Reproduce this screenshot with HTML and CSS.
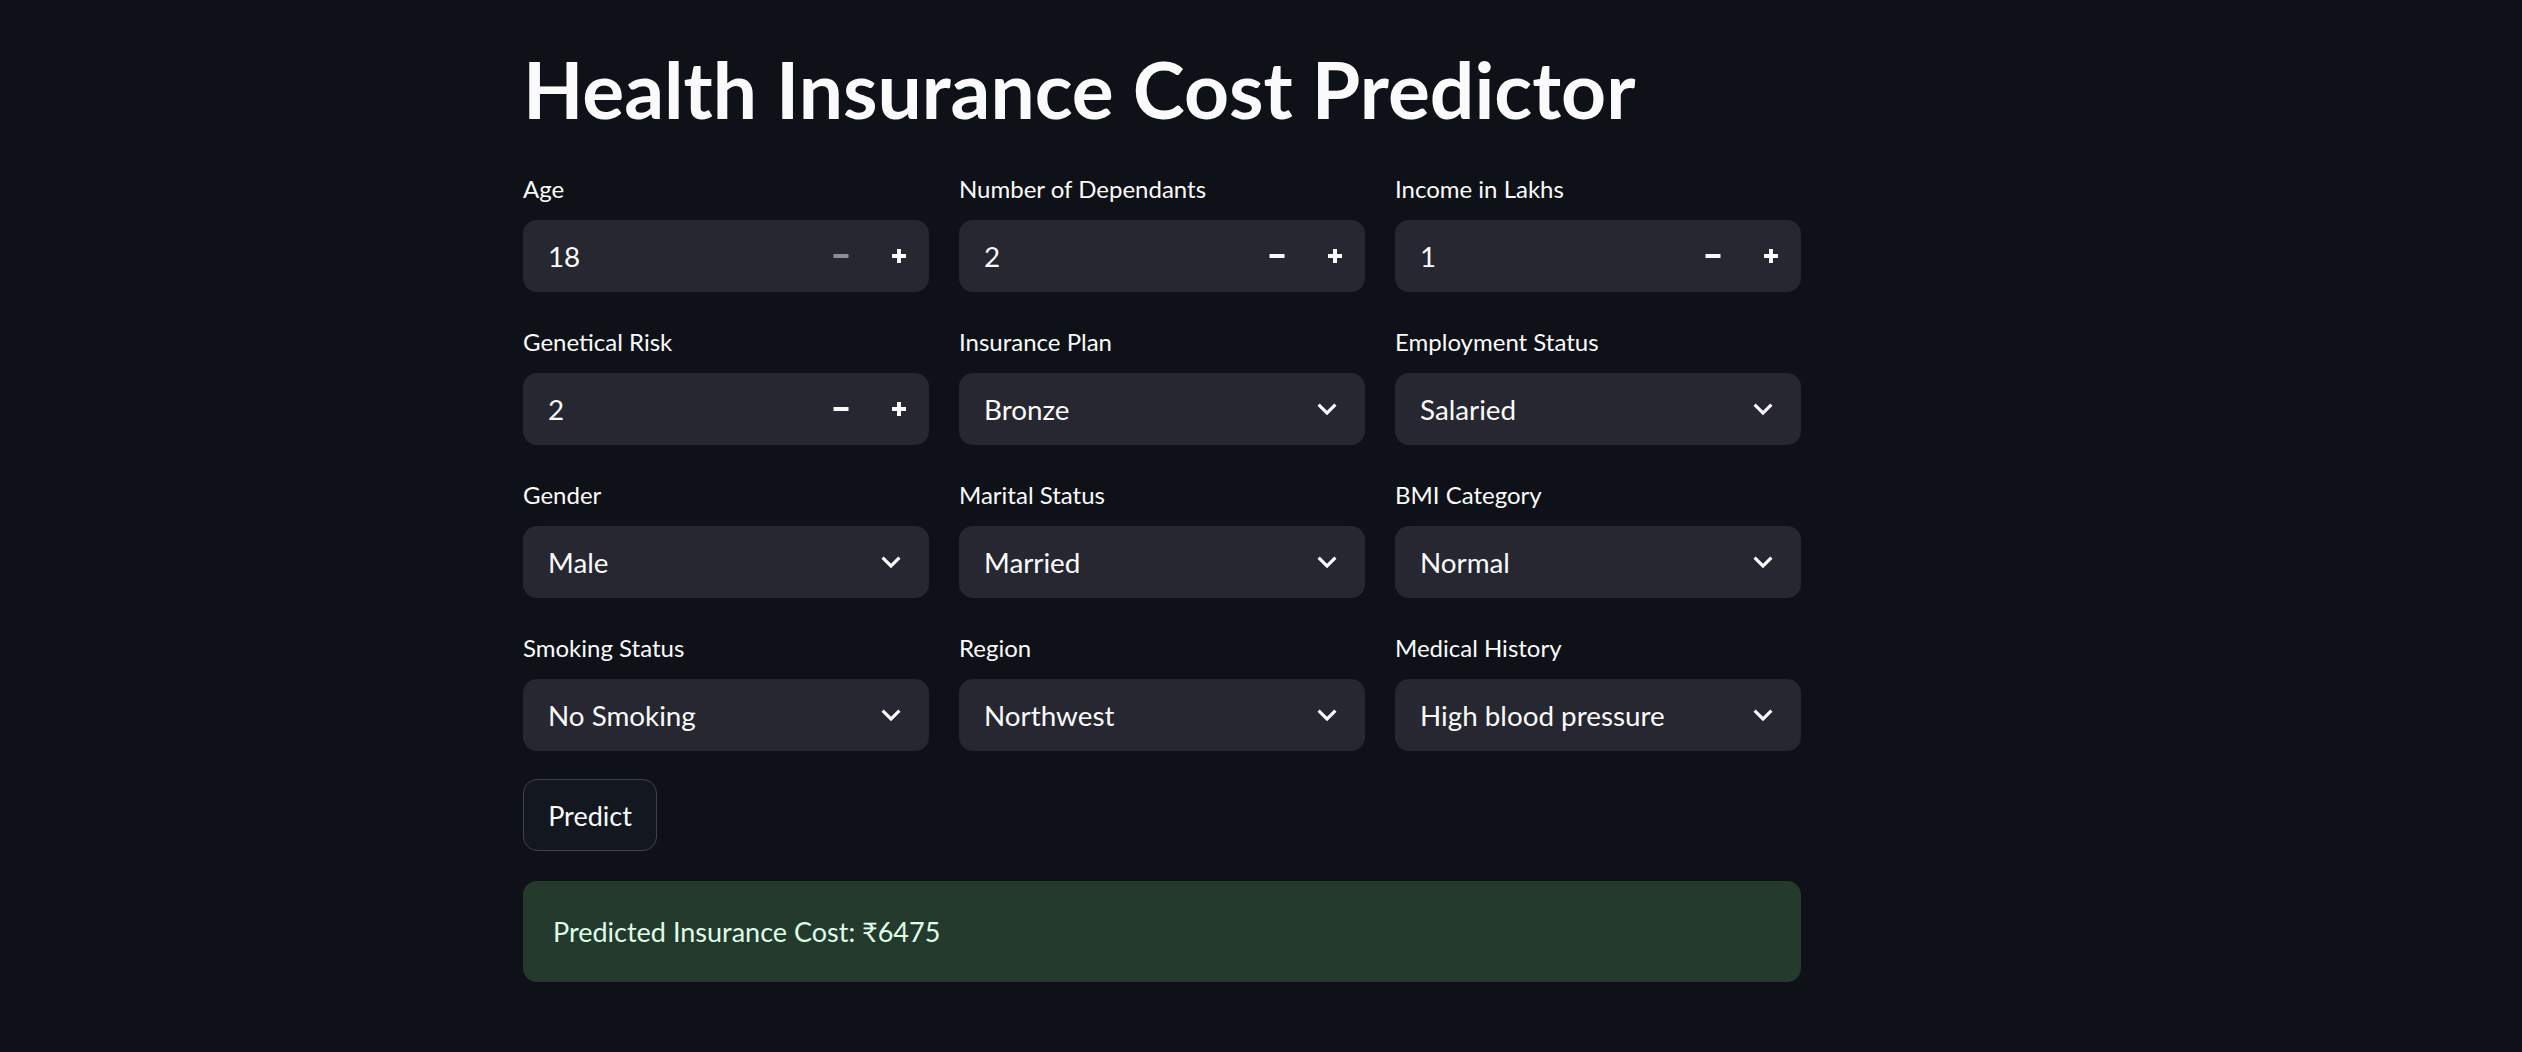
FILE: index.html
```html
<!DOCTYPE html>
<html lang="en">
<head>
<meta charset="utf-8">
<title>Health Insurance Cost Predictor</title>
<link rel="stylesheet" href="styles.css">
</head>
<body>
<main class="page">
  <h1 class="title">Health Insurance Cost Predictor</h1>
  <section class="form-grid">
    <div class="field">
      <label class="field-label">Age</label>
      <div class="control">
        <span class="value">18</span>
        <span class="steppers">
          <span class="step step-disabled"><svg width="16" height="16" viewBox="0 0 16 16"><rect x="0.5" y="6" width="15" height="4" fill="currentColor"/></svg></span>
          <span class="step"><svg width="16" height="16" viewBox="0 0 16 16"><rect x="1" y="6" width="14" height="4" fill="currentColor"/><rect x="6" y="1" width="4" height="14" fill="currentColor"/></svg></span>
        </span>
      </div>
    </div>
    <div class="field">
      <label class="field-label">Number of Dependants</label>
      <div class="control">
        <span class="value">2</span>
        <span class="steppers">
          <span class="step"><svg width="16" height="16" viewBox="0 0 16 16"><rect x="0.5" y="6" width="15" height="4" fill="currentColor"/></svg></span>
          <span class="step"><svg width="16" height="16" viewBox="0 0 16 16"><rect x="1" y="6" width="14" height="4" fill="currentColor"/><rect x="6" y="1" width="4" height="14" fill="currentColor"/></svg></span>
        </span>
      </div>
    </div>
    <div class="field">
      <label class="field-label">Income in Lakhs</label>
      <div class="control">
        <span class="value">1</span>
        <span class="steppers">
          <span class="step"><svg width="16" height="16" viewBox="0 0 16 16"><rect x="0.5" y="6" width="15" height="4" fill="currentColor"/></svg></span>
          <span class="step"><svg width="16" height="16" viewBox="0 0 16 16"><rect x="1" y="6" width="14" height="4" fill="currentColor"/><rect x="6" y="1" width="4" height="14" fill="currentColor"/></svg></span>
        </span>
      </div>
    </div>

    <div class="field">
      <label class="field-label">Genetical Risk</label>
      <div class="control">
        <span class="value">2</span>
        <span class="steppers">
          <span class="step"><svg width="16" height="16" viewBox="0 0 16 16"><rect x="0.5" y="6" width="15" height="4" fill="currentColor"/></svg></span>
          <span class="step"><svg width="16" height="16" viewBox="0 0 16 16"><rect x="1" y="6" width="14" height="4" fill="currentColor"/><rect x="6" y="1" width="4" height="14" fill="currentColor"/></svg></span>
        </span>
      </div>
    </div>
    <div class="field">
      <label class="field-label">Insurance Plan</label>
      <div class="control select">
        <span class="value">Bronze</span>
        <svg class="chevron" width="38" height="38" viewBox="0 0 24 24"><path d="M16.59 8.59L12 13.17 7.41 8.59 6 10l6 6 6-6z" fill="currentColor"/></svg>
      </div>
    </div>
    <div class="field">
      <label class="field-label">Employment Status</label>
      <div class="control select">
        <span class="value">Salaried</span>
        <svg class="chevron" width="38" height="38" viewBox="0 0 24 24"><path d="M16.59 8.59L12 13.17 7.41 8.59 6 10l6 6 6-6z" fill="currentColor"/></svg>
      </div>
    </div>

    <div class="field">
      <label class="field-label">Gender</label>
      <div class="control select">
        <span class="value">Male</span>
        <svg class="chevron" width="38" height="38" viewBox="0 0 24 24"><path d="M16.59 8.59L12 13.17 7.41 8.59 6 10l6 6 6-6z" fill="currentColor"/></svg>
      </div>
    </div>
    <div class="field">
      <label class="field-label">Marital Status</label>
      <div class="control select">
        <span class="value">Married</span>
        <svg class="chevron" width="38" height="38" viewBox="0 0 24 24"><path d="M16.59 8.59L12 13.17 7.41 8.59 6 10l6 6 6-6z" fill="currentColor"/></svg>
      </div>
    </div>
    <div class="field">
      <label class="field-label">BMI Category</label>
      <div class="control select">
        <span class="value">Normal</span>
        <svg class="chevron" width="38" height="38" viewBox="0 0 24 24"><path d="M16.59 8.59L12 13.17 7.41 8.59 6 10l6 6 6-6z" fill="currentColor"/></svg>
      </div>
    </div>

    <div class="field">
      <label class="field-label">Smoking Status</label>
      <div class="control select">
        <span class="value">No Smoking</span>
        <svg class="chevron" width="38" height="38" viewBox="0 0 24 24"><path d="M16.59 8.59L12 13.17 7.41 8.59 6 10l6 6 6-6z" fill="currentColor"/></svg>
      </div>
    </div>
    <div class="field">
      <label class="field-label">Region</label>
      <div class="control select">
        <span class="value">Northwest</span>
        <svg class="chevron" width="38" height="38" viewBox="0 0 24 24"><path d="M16.59 8.59L12 13.17 7.41 8.59 6 10l6 6 6-6z" fill="currentColor"/></svg>
      </div>
    </div>
    <div class="field">
      <label class="field-label">Medical History</label>
      <div class="control select">
        <span class="value">High blood pressure</span>
        <svg class="chevron" width="38" height="38" viewBox="0 0 24 24"><path d="M16.59 8.59L12 13.17 7.41 8.59 6 10l6 6 6-6z" fill="currentColor"/></svg>
      </div>
    </div>
  </section>

  <div class="actions">
    <button class="predict-btn" type="button">Predict</button>
  </div>

  <div class="result">Predicted Insurance Cost: ₹6475</div>
</main>
</body>
</html>
```

FILE: styles.css
```css
html, body {
  margin: 0;
  padding: 0;
  background: #0e1117;
  color: #fafafa;
  font-family: Lato, "Noto Sans", "DejaVu Sans", sans-serif;
}

.page {
  width: 1278px;
  margin-left: 523px;
  padding-top: 42px;
  display: flex;
  flex-direction: column;
}

.title {
  margin: 0 0 31px 0;
  font-size: 78.5px;
  line-height: 95px;
  font-weight: 700;
  letter-spacing: 0;
  color: #fafafa;
}

.form-grid {
  display: grid;
  grid-template-columns: repeat(3, 406px);
  column-gap: 30px;
  row-gap: 29px;
}

.field {
  display: flex;
  flex-direction: column;
}

.field-label {
  display: block;
  height: 52px;
  box-sizing: border-box;
  padding-top: 3px;
  font-size: 24px;
  line-height: 36px;
  color: #fafafa;
}

.control {
  height: 72px;
  background: #262730;
  border-radius: 14px;
  display: flex;
  align-items: center;
  padding-left: 25px;
  box-sizing: border-box;
}

.value {
  flex: 1;
  font-size: 27.8px;
  color: #fafafa;
  white-space: nowrap;
}

.steppers {
  display: flex;
  height: 100%;
  margin-right: 1px;
}

.step {
  width: 58px;
  display: flex;
  align-items: center;
  justify-content: center;
  color: #fafafa;
}

.step-disabled {
  color: #8c8e98;
}

.select {
  padding-right: 19px;
}

.chevron {
  color: #fafafa;
  display: block;
}

.actions {
  margin-top: 28px;
  display: flex;
}

.predict-btn {
  height: 72px;
  padding: 0 24px;
  width: 134px;
  background: #131720;
  border: 1.5px solid #3f424a;
  border-radius: 14px;
  color: #fafafa;
  font-family: Lato, "Noto Sans", "DejaVu Sans", sans-serif;
  font-size: 27px;
}

.result {
  margin-top: 30px;
  height: 101px;
  box-sizing: border-box;
  background: #233a2d;
  border-radius: 14px;
  display: flex;
  align-items: center;
  padding-left: 30px;
  font-size: 27px;
  color: #dffde9;
}
```
